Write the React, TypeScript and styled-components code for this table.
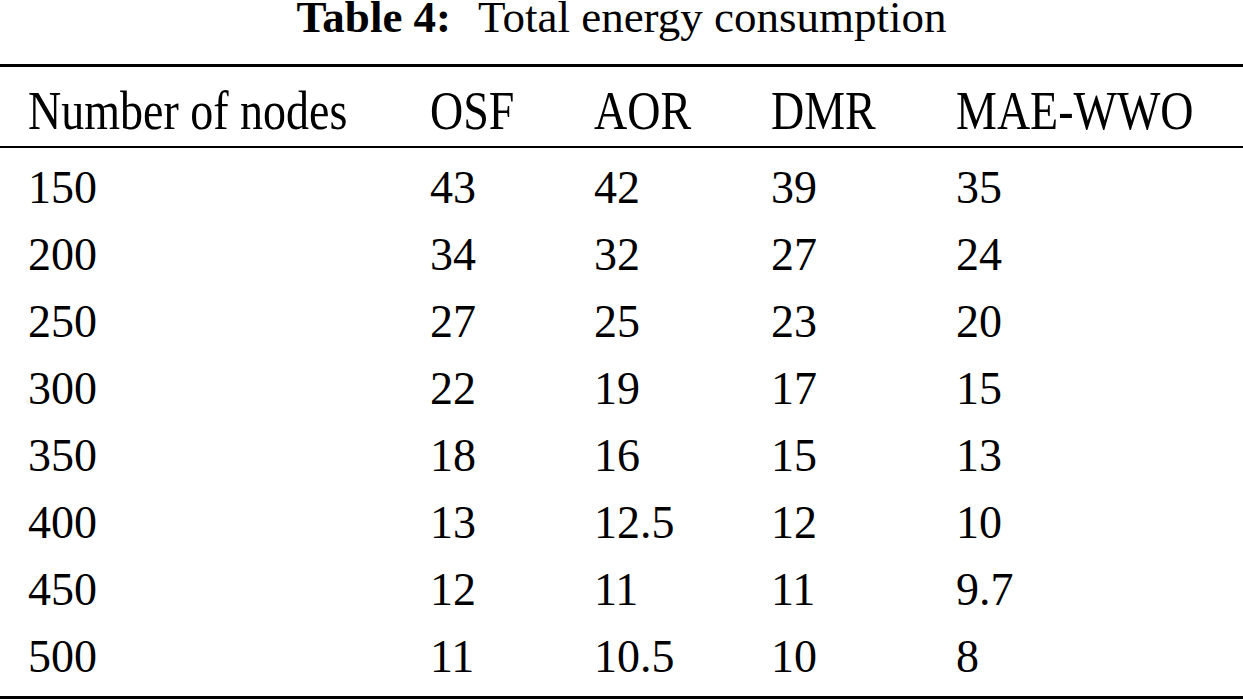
// 표 4: 전체 에너지 소비량
import styled, { createGlobalStyle } from "styled-components";

const GlobalStyle = createGlobalStyle`
    html, body {
        margin: 0;
        padding: 0;
        background: #ffffff;
    }
    body {
        font-family: "Liberation Serif", "Times New Roman", serif;
        color: #000000;
        overflow: hidden;
    }
`;

const Page = styled.div`
    width: 1243px;
    height: 699px;
    display: flex;
    flex-direction: column;
`;

// 표 제목
const Caption = styled.div`
    height: 35px;
    margin-bottom: 29px;
    font-size: 45px;
    line-height: 35px;
    text-align: center;
    white-space: nowrap;
`;
const CaptionLabel = styled.span`
    font-weight: bold;
`;
const CaptionText = styled.span`
    margin-left: 27px;
`;

// 표 본체
const Table = styled.div`
    border-top: 3px solid #000;
    border-bottom: 3px solid #000;
    font-size: 46px;
`;

const Grid = styled.div<{ $head?: boolean }>`
    display: grid;
    grid-template-columns: 402px 164px 177px 185px 1fr;
    padding-left: 28px;
    height: ${(p) => (p.$head ? "79px" : "67px")};
    line-height: ${(p) => (p.$head ? "51px" : "67px")};
    padding-top: ${(p) => (p.$head ? "21px" : "0")};
    box-sizing: border-box;
    border-bottom: ${(p) => (p.$head ? "2px solid #000" : "none")};
    height: ${(p) => (p.$head ? "81px" : "67px")};
`;

const Body = styled.div`
    padding: 6px 0;
`;

const Cell = styled.div`
    white-space: nowrap;
`;

// 헤더 글자는 세로로 약간 길쭉함
const HeadText = styled.span`
    display: inline-block;
    transform: scaleY(1.18);
    transform-origin: 0 41px;
`;

const heads = ["Number of nodes", "OSF", "AOR", "DMR", "MAE-WWO"];

const rows = [
    ["150", "43", "42", "39", "35"],
    ["200", "34", "32", "27", "24"],
    ["250", "27", "25", "23", "20"],
    ["300", "22", "19", "17", "15"],
    ["350", "18", "16", "15", "13"],
    ["400", "13", "12.5", "12", "10"],
    ["450", "12", "11", "11", "9.7"],
    ["500", "11", "10.5", "10", "8"],
];

export default () => {
    return (
        <Page>
            <GlobalStyle />
            <Caption>
                <CaptionLabel>Table 4:</CaptionLabel>
                <CaptionText>Total energy consumption</CaptionText>
            </Caption>
            <Table>
                <Grid $head>
                    {heads.map((h) => (
                        <Cell key={h}>
                            <HeadText>{h}</HeadText>
                        </Cell>
                    ))}
                </Grid>
                <Body>
                    {rows.map((r) => (
                        <Grid key={r[0]}>
                            {r.map((v, i) => (
                                <Cell key={i}>{v}</Cell>
                            ))}
                        </Grid>
                    ))}
                </Body>
            </Table>
        </Page>
    );
};
